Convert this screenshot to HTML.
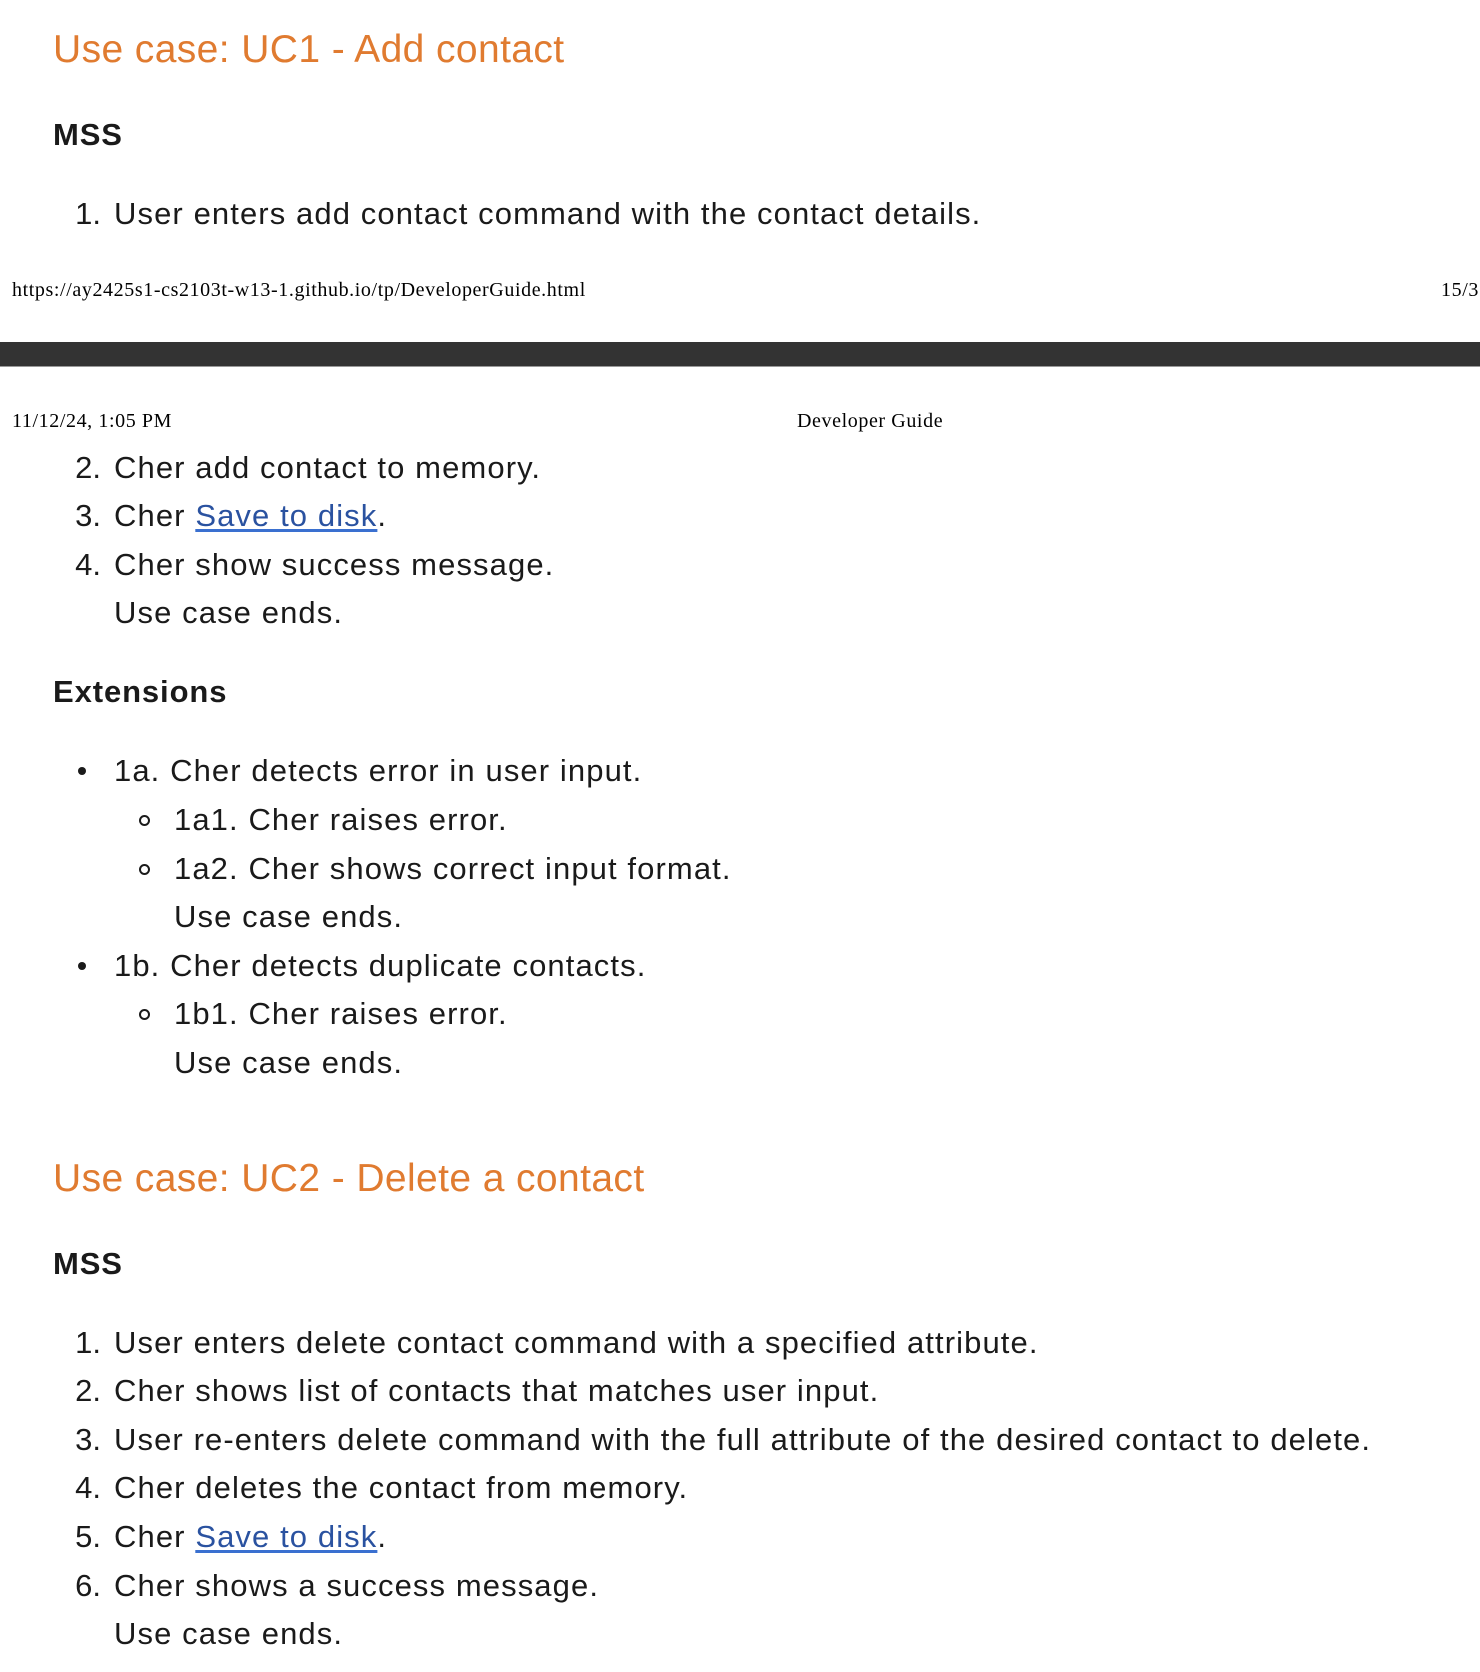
<!DOCTYPE html>
<html><head><meta charset="utf-8"><style>
html,body{margin:0;padding:0;background:#fff;width:1480px;height:1672px;overflow:hidden;position:relative}
.t{position:absolute;font-family:"Liberation Sans",sans-serif;font-size:31px;letter-spacing:1.1px;line-height:48px;color:#1a1a1a;white-space:nowrap}
.h{color:#e07b30;font-size:39px;letter-spacing:0.4px;line-height:50px}
.b{font-weight:bold;font-size:31px;letter-spacing:0.9px}
.s{position:absolute;font-family:"Liberation Serif",serif;font-size:20px;letter-spacing:0.6px;line-height:22px;color:#000;white-space:nowrap}
a{color:#2a52a0;text-decoration:underline;text-decoration-color:#3a70d0;text-underline-offset:3px}
.n{position:absolute;left:-53px;width:40px;text-align:right;letter-spacing:0}
.d{position:absolute;left:-36px;top:20px;width:8px;height:8px;border-radius:50%;background:#1a1a1a}
.c{position:absolute;left:-35px;top:19px;width:7px;height:7px;border-radius:50%;border:2px solid #1a1a1a}
.bar{position:absolute;left:0;top:342px;width:1480px;height:24px;background:#333;border-bottom:1px solid #999}
</style></head><body>
<div class="t h" style="left:53px;top:25px">Use case: UC1 - Add contact</div>
<div class="t b" style="left:53px;top:111px">MSS</div>
<div class="t" style="left:114px;top:190px"><span class="n">1.</span>User enters add contact command with the contact details.</div>
<div class="s" style="left:12px;top:279px">https://ay2425s1-cs2103t-w13-1.github.io/tp/DeveloperGuide.html</div>
<div class="s" style="left:1441px;top:279px">15/3</div>
<div class="bar"></div>
<div class="s" style="left:12px;top:410px">11/12/24, 1:05 PM</div>
<div class="s" style="left:797px;top:410px">Developer Guide</div>
<div class="t" style="left:114px;top:444px"><span class="n">2.</span>Cher add contact to memory.</div>
<div class="t" style="left:114px;top:492px"><span class="n">3.</span>Cher <a>Save to disk</a>.</div>
<div class="t" style="left:114px;top:541px"><span class="n">4.</span>Cher show success message.</div>
<div class="t" style="left:114px;top:589px">Use case ends.</div>
<div class="t b" style="left:53px;top:668px">Extensions</div>
<div class="t" style="left:114px;top:747px"><span class="d"></span>1a. Cher detects error in user input.</div>
<div class="t" style="left:174px;top:796px"><span class="c"></span>1a1. Cher raises error.</div>
<div class="t" style="left:174px;top:845px"><span class="c"></span>1a2. Cher shows correct input format.</div>
<div class="t" style="left:174px;top:893px">Use case ends.</div>
<div class="t" style="left:114px;top:942px"><span class="d"></span>1b. Cher detects duplicate contacts.</div>
<div class="t" style="left:174px;top:990px"><span class="c"></span>1b1. Cher raises error.</div>
<div class="t" style="left:174px;top:1039px">Use case ends.</div>
<div class="t h" style="left:53px;top:1154px">Use case: UC2 - Delete a contact</div>
<div class="t b" style="left:53px;top:1240px">MSS</div>
<div class="t" style="left:114px;top:1319px"><span class="n">1.</span>User enters delete contact command with a specified attribute.</div>
<div class="t" style="left:114px;top:1367px"><span class="n">2.</span>Cher shows list of contacts that matches user input.</div>
<div class="t" style="left:114px;top:1416px"><span class="n">3.</span>User re-enters delete command with the full attribute of the desired contact to delete.</div>
<div class="t" style="left:114px;top:1464px"><span class="n">4.</span>Cher deletes the contact from memory.</div>
<div class="t" style="left:114px;top:1513px"><span class="n">5.</span>Cher <a>Save to disk</a>.</div>
<div class="t" style="left:114px;top:1562px"><span class="n">6.</span>Cher shows a success message.</div>
<div class="t" style="left:114px;top:1610px">Use case ends.</div>
</body></html>
